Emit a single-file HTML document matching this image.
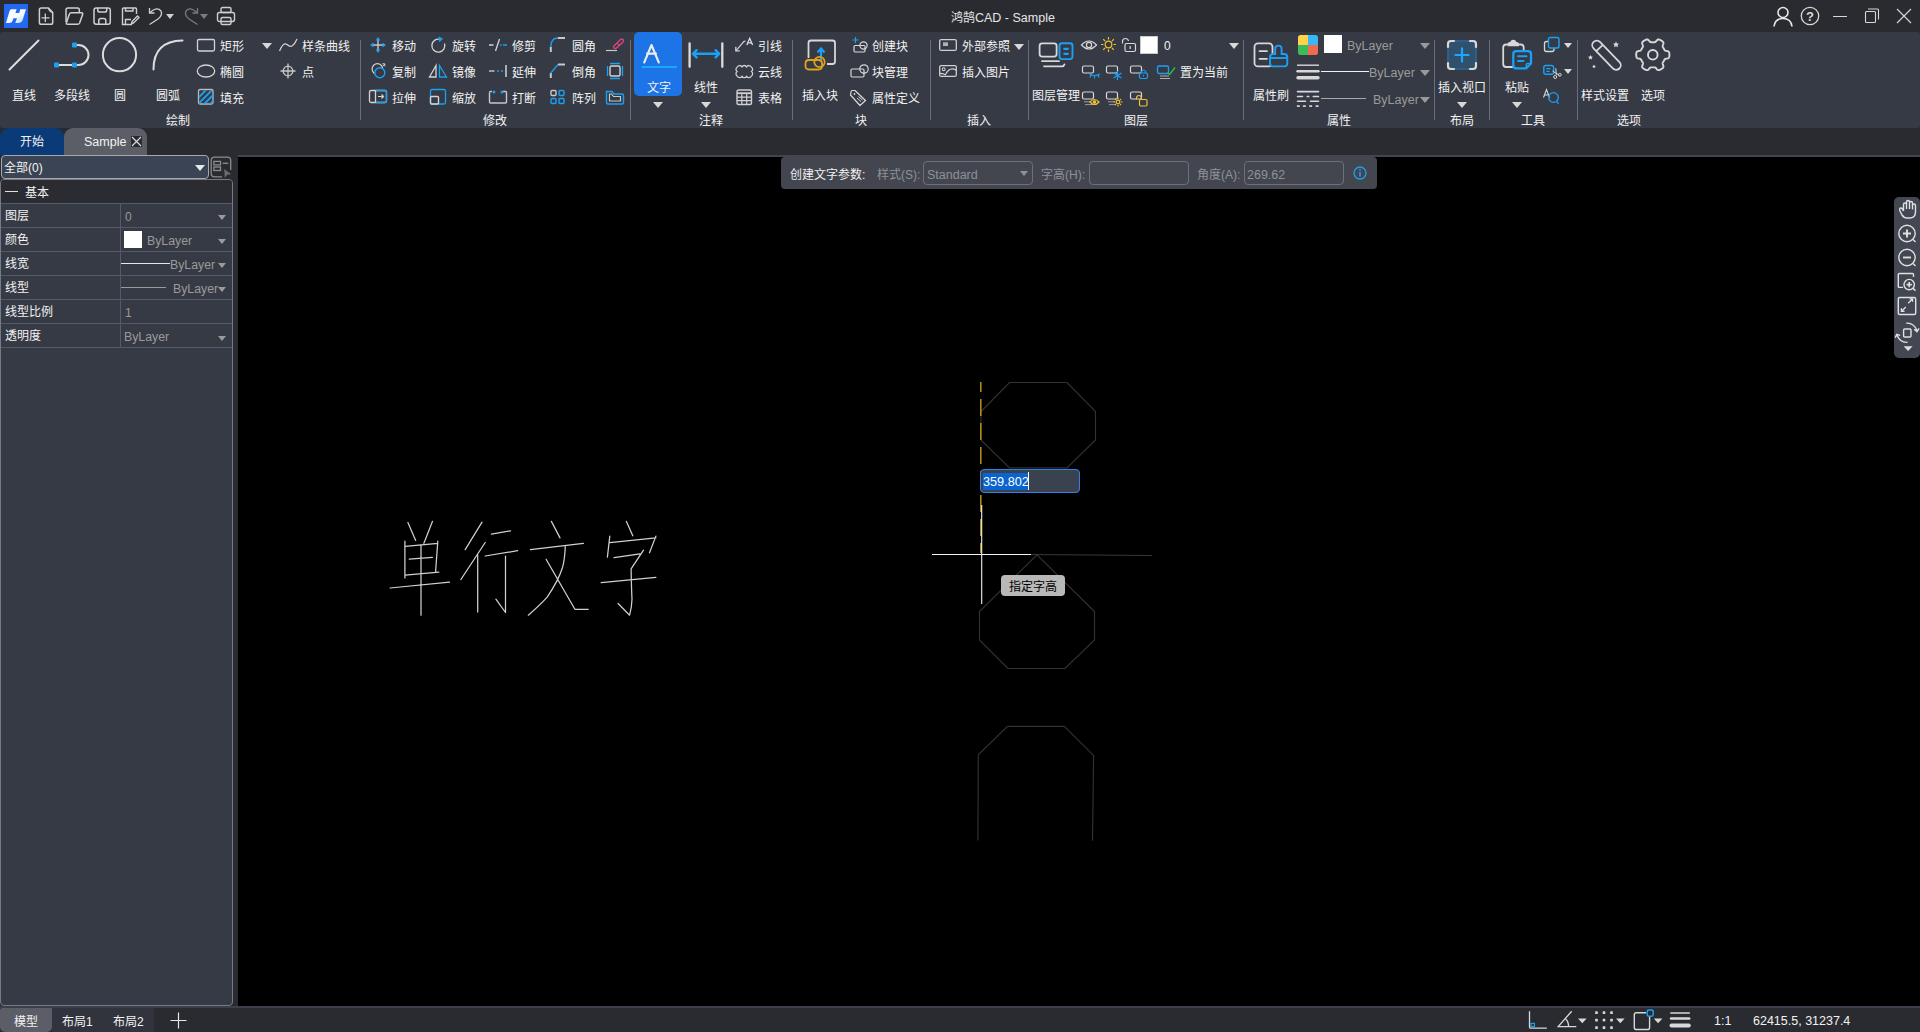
<!DOCTYPE html>
<html lang="zh-CN"><head><meta charset="utf-8">
<style>
*{margin:0;padding:0;box-sizing:border-box}
html,body{width:1920px;height:1032px;overflow:hidden;background:#2a2b30;font-family:"Liberation Sans",sans-serif;font-size:12px;color:#f2f2f2}
.a{position:absolute}
.t{position:absolute;white-space:nowrap;line-height:16px;font-size:12px}
.L{margin-top:-1px}
svg{position:absolute;overflow:visible}
#title{left:0;top:0;width:1920px;height:32px;background:#2a2b30}
#ribbon{left:0;top:32px;width:1920px;height:96px;background:#363a44;border-radius:3px}
#tabs{left:0;top:128px;width:1920px;height:27px;background:#2a2b30}
#left{left:0;top:155px;width:238px;height:851px;background:#2a2b30}
#canvas{left:238px;top:155px;width:1682px;height:851px;background:#000}
#status{left:0;top:1006px;width:1920px;height:26px;background:#2a2b30}
.sep{position:absolute;top:40px;width:1px;height:80px;background:#6a6e78}
.grp{position:absolute;top:113px;line-height:13px}
.tri{position:absolute;width:0;height:0;border-left:5px solid transparent;border-right:5px solid transparent;border-top:6px solid #d8d8d8}
</style></head><body>
<div id="title" class="a"></div>
<!-- TITLE BAR -->
<div class="a" style="left:4px;top:4px;width:24px;height:24px;background:#2468f2"></div>
<svg style="left:0;top:0" width="32" height="32" viewBox="0 0 32 32"><defs><linearGradient id="lg" x1="0" y1="0" x2="1" y2="1"><stop offset="0" stop-color="#ffffff"/><stop offset="0.55" stop-color="#f4fbff"/><stop offset="1" stop-color="#9fd8f5"/></linearGradient></defs><path d="M11.3 9.3 H16.6 L15.4 12.9 H19.2 L20.3 9.3 H26 L22.6 20.3 Q21.8 23 19 23 H15.3 L17 18.3 H13.4 L12.6 20.8 Q11.9 23 9.3 23 H6 L9.4 11.6 Q10 9.3 11.3 9.3 Z" fill="url(#lg)"/></svg>
<svg style="left:0;top:0" width="120" height="32" viewBox="0 0 120 32" fill="none" stroke="#cfcfcf" stroke-width="1.5" stroke-linejoin="round">
<path d="M41.2 7.9 H48.5 L52.7 12.6 V22.4 Q52.7 24.2 50.9 24.2 H41.2 Q39.4 24.2 39.4 22.4 V9.7 Q39.4 7.9 41.2 7.9 Z"/>
<path d="M48.6 8.5 Q49 11.5 52.2 12.4" stroke-width="1.2"/>
<path d="M41.5 17.9 H49.6 M45.3 13.6 V21.9" stroke-width="1.3"/>
<path d="M66 22 V9.7 Q66 7.9 67.8 7.9 H77.5 Q79.3 7.9 79.3 9.7 V12.6"/>
<path d="M66.3 23.2 L69.2 14.6 Q69.7 12.8 71.5 12.8 H81.5 Q83.2 12.8 82.6 14.6 L79.6 23 Q79 24.3 77.5 24.3 H67.7 Q65.9 24.3 66.3 23.2 Z"/>
<rect x="94" y="7.9" width="16.3" height="16.3" rx="2.2"/>
<path d="M97.8 8 V10.3 Q97.8 12.1 99.6 12.1 H104.9 Q106.7 12.1 106.7 10.3 V8"/>
<path d="M98.8 24 V20.6 Q98.8 18.6 100.8 18.6 H103.8 Q105.8 18.6 105.8 20.6 V24"/>
</svg>
<svg style="left:120px;top:6px" width="20" height="20" viewBox="0 0 20 20" fill="none" stroke="#cfcfcf" stroke-width="1.4"><path d="M12 18.5 H2.5 V3 Q2.5 2 3.5 2 H15.5 Q16.5 2 16.5 3 V8"/><path d="M5.5 2 V5 H13 V2 M5.5 18 V13.5 H11"/><path d="M11.5 18 L12 15.5 L17.5 10 L19 11.5 L13.5 17 Z"/></svg>
<svg style="left:148px;top:6px" width="18" height="20" viewBox="0 0 18 20" fill="none" stroke="#cfcfcf" stroke-width="1.3"><path d="M2 6.5 Q9 0 13 5 Q15 9 10 13 L1.5 18.5"/><path d="M1.5 2 L1.5 7 L6.5 7"/></svg>
<div class="tri" style="left:166px;top:14px;border-left-width:4.5px;border-right-width:4.5px;border-top-width:5px;border-top-color:#d0d0d0"></div>
<svg style="left:181px;top:6px" width="18" height="20" viewBox="0 0 18 20" fill="none" stroke="#7a7a7e" stroke-width="1.3"><path d="M16 6.5 Q9 0 5 5 Q3 9 8 13 L16.5 18.5"/><path d="M16.5 2 L16.5 7 L11.5 7"/></svg>
<div class="tri" style="left:200px;top:14px;border-left-width:4.5px;border-right-width:4.5px;border-top-width:5px;border-top-color:#7a7a7e"></div>
<svg style="left:216px;top:6px" width="20" height="20" viewBox="0 0 20 20" fill="none" stroke="#cfcfcf" stroke-width="1.4"><rect x="1.5" y="6.5" width="17" height="9" rx="2"/><rect x="5" y="1.5" width="10" height="5" rx="1.5"/><rect x="5" y="11.5" width="10" height="7" rx="1.5"/></svg>
<div class="t" style="left:951px;top:10px;color:#e6e6e6">鸿鹄<span style="font-size:12.5px">CAD - Sample</span></div>
<svg style="left:1772px;top:5px" width="22" height="22" viewBox="0 0 22 22" fill="none" stroke="#e8e8e8" stroke-width="1.6"><circle cx="11" cy="7.5" r="5"/><path d="M2 21.5 Q3 13.5 11 13.5 Q19 13.5 20 21.5"/></svg>
<svg style="left:1800px;top:6px" width="20" height="20" viewBox="0 0 20 20" fill="none" stroke="#d8d8d8" stroke-width="1.3"><circle cx="10" cy="10" r="8.7"/><text x="10" y="14.5" font-size="13" font-weight="bold" fill="#d8d8d8" stroke="none" text-anchor="middle" font-family="Liberation Sans">?</text></svg>
<div class="a" style="left:1833px;top:16px;width:14px;height:1px;background:#d8d8d8"></div>
<svg style="left:1864px;top:7px" width="17" height="17" viewBox="0 0 17 17" fill="none" stroke="#d8d8d8" stroke-width="1.1"><rect x="1.5" y="4.5" width="10" height="11" rx="1"/><path d="M4 2 H13.5 Q14.5 2 14.5 3 V12.5"/></svg>
<svg style="left:1896px;top:8px" width="16" height="16" viewBox="0 0 16 16" fill="none" stroke="#d8d8d8" stroke-width="1.1"><path d="M1 1 L15 15 M15 1 L1 15"/></svg>

<div id="ribbon" class="a"></div>
<div id="tabs" class="a"></div>
<!-- RIBBON: draw group -->
<svg style="left:0;top:32px" width="200" height="50" viewBox="0 32 200 50" fill="none" stroke="#dcdcdc" stroke-width="2" stroke-linecap="round">
<path d="M9.5 69.5 L38.5 40.5"/>
<path d="M74.5 45 H78.5 A10 10 0 0 1 78.5 65 H56.5"/>
<circle cx="119.5" cy="54.7" r="16.6"/>
<path d="M153.5 69.5 Q153.5 41 182.5 40.5"/>
<g fill="#1aa0f5" stroke="none"><rect x="72" y="42.5" width="5" height="5" rx="1.2"/><rect x="72" y="62.5" width="5" height="5" rx="1.2"/><rect x="54" y="62.5" width="5" height="5" rx="1.2"/></g>
</svg>
<div class="t" style="left:12px;top:88px">直线</div>
<div class="t" style="left:54px;top:88px">多段线</div>
<div class="t" style="left:114px;top:88px">圆</div>
<div class="t" style="left:156px;top:88px">圆弧</div>
<svg style="left:190px;top:32px" width="170" height="80" viewBox="190 32 170 80" fill="none" stroke="#d4d4d4" stroke-width="1.3">
<rect x="197.5" y="39.5" width="17" height="11.5" rx="1.5"/>
<ellipse cx="206" cy="71" rx="8.7" ry="6"/>
<rect x="198.5" y="89.5" width="14.5" height="14.5" rx="1.5" stroke="#b8b8b8"/>
<clipPath id="fc"><rect x="199.2" y="90.2" width="13.6" height="13.6"/></clipPath><g stroke="#1aa0f5" stroke-width="1.9" clip-path="url(#fc)"><path d="M196 100.2 L206 90.2 M196 106.2 L212 90.2 M202 106.2 L214 94.2 M208 106.2 L214 100.2"/></g>
<path d="M279.5 51 Q283 42 287 44.5 Q290 47 292 46 Q295 44 297 39" stroke-width="1.2"/>
<circle cx="288" cy="71" r="4.8" stroke="#c8c8c8"/>
<path d="M288 63.5 V78.5 M280.5 71 H295.5" stroke="#c8c8c8"/>
</svg>
<div class="tri" style="left:262px;top:43px;border-top-color:#d8d8d8"></div>
<div class="t" style="left:220px;top:39px">矩形</div>
<div class="t" style="left:302px;top:39px">样条曲线</div>
<div class="t" style="left:220px;top:65px">椭圆</div>
<div class="t" style="left:302px;top:65px">点</div>
<div class="t" style="left:220px;top:91px">填充</div>
<div class="t" style="left:166px;top:113px">绘制</div>
<div class="sep" style="left:360px"></div>
<!-- RIBBON: modify group -->
<svg style="left:360px;top:32px" width="272" height="80" viewBox="360 32 272 80" fill="none" stroke="#d4d4d4" stroke-width="1.3">
<!-- move -->
<path d="M378 38 V52 M371 45 H385" stroke="#c8c8c8" stroke-width="1.4"/>
<g fill="#1aa0f5" stroke="none"><path d="M378 37 L375.5 40.5 H380.5Z M378 53 L375.5 49.5 H380.5Z M370 45 L373.5 42.5 V47.5Z M386 45 L382.5 42.5 V47.5Z"/></g>
<!-- rotate -->
<path d="M440.5 39.5 A6.5 6.5 0 1 0 444.5 43.5"/>
<path d="M439 37 L442.5 39 L439.5 41.5 Z" fill="#1aa0f5" stroke="#1aa0f5" stroke-width="1"/>
<!-- copy -->
<circle cx="377.4" cy="69" r="5.3" stroke-width="1.2"/>
<circle cx="379.8" cy="72.8" r="5" stroke="#1aa0f5" stroke-width="1.4" fill="#363a44"/>
<path d="M382.3 63.8 H384.8 V66.3 M383 66 L384.8 64" stroke-width="1"/>
<!-- mirror -->
<path d="M436 65.5 L429.5 77 H436 Z"/>
<path d="M439.5 65.5 L446.5 77 H439.5 Z" stroke="#1aa0f5"/>
<!-- stretch -->
<rect x="369.5" y="90.5" width="17" height="12" rx="1.5"/>
<path d="M375.5 90.5 H385 Q386.5 90.5 386.5 92 V101 Q386.5 102.5 385 102.5 H375.5" stroke="#1aa0f5"/>
<path d="M375.5 90.5 V102.5" />
<path d="M378 96.5 H383 M381.5 94.5 L383.5 96.5 L381.5 98.5" stroke-width="1.2"/>
<!-- scale -->
<rect x="430.5" y="89.5" width="15" height="14.5" rx="1.5" stroke="#1aa0f5"/>
<rect x="430.5" y="96.5" width="8" height="7.5" rx="1" stroke="#d4d4d4" stroke-width="1.4"/>
<!-- trim -->
<path d="M489 45 H493.5 M495.5 51 L499.5 39" stroke-width="1.3"/>
<path d="M500 45 H501.5 M503 45 H507" stroke="#1aa0f5" stroke-width="1.3"/>
<!-- extend -->
<path d="M489 71 H494.5" stroke-width="1.3"/>
<path d="M497 71 H499 M501 71 H503" stroke="#1aa0f5" stroke-width="1.3"/>
<path d="M506 65 V77" stroke-width="1.5"/>
<!-- break -->
<path d="M489.5 92.5 V102 Q489.5 103 490.5 103 H505.5 Q506.5 103 506.5 102 V92.5 Q506.5 91.5 505.5 91.5 H503" stroke="#c8c8c8" stroke-width="1.4"/>
<path d="M492 91.5 H490.5 Q489.5 91.5 489.5 92.5" stroke="#c8c8c8" stroke-width="1.4"/>
<g fill="#1aa0f5" stroke="none"><circle cx="494" cy="92" r="1.5"/><circle cx="502" cy="92" r="1.5"/></g>
<!-- fillet -->
<path d="M550.8 52 V47" stroke="#c8c8c8" stroke-width="2"/>
<path d="M550.8 47 Q550.8 38 558 38" stroke="#1aa0f5" stroke-width="1.3"/>
<path d="M558 38 H565" stroke="#c8c8c8" stroke-width="2"/>
<!-- chamfer -->
<path d="M550.8 78 V73" stroke="#c8c8c8" stroke-width="2"/>
<path d="M550.8 73 L558 64.5" stroke="#1aa0f5" stroke-width="1.3"/>
<path d="M558 64.5 H565" stroke="#c8c8c8" stroke-width="2"/>
<!-- array -->
<g stroke-width="1.4"><rect x="551" y="90.5" width="5" height="5" rx="1" stroke="#c8c8c8"/><rect x="559" y="90.5" width="5" height="5" rx="1" stroke="#1aa0f5"/><rect x="551" y="98.5" width="5" height="5" rx="1" stroke="#1aa0f5"/><rect x="559" y="98.5" width="5" height="5" rx="1" stroke="#1aa0f5"/></g>
<!-- eraser -->
<path d="M606 50.5 H617" stroke="#c8c8c8" stroke-width="1.2"/>
<path d="M614 46 L620.5 39.5 Q622 38.5 623 39.5 Q624 40.5 623 42 L616.5 48 Q615 49 614 48 Q613 47 614 46 Z M617 43 L619.5 45.5" stroke="#e0457b" stroke-width="1.3"/>
<!-- offset -->
<rect x="610" y="66" width="10" height="10" rx="1.5" stroke="#d4d4d4" stroke-width="1.4"/>
<path d="M610 63.5 H620 M610 78.5 H620 M607.5 66 V76 M622.5 66 V76" stroke="#1aa0f5" stroke-width="1.3"/>
<!-- folder-like -->
<path d="M606.5 91.5 H612 L614 94 H622 Q623.5 94 623.5 95.5 V102.5 Q623.5 104 622 104 H608 Q606.5 104 606.5 102.5 Z" stroke="#1aa0f5" stroke-width="1.4"/>
<path d="M609.5 94 H611.5 L613.5 96.5 H620.5 V101 H609.5 Z" stroke="#c8c8c8" stroke-width="1.2"/>
</svg>
<div class="t" style="left:392px;top:39px">移动</div>
<div class="t" style="left:452px;top:39px">旋转</div>
<div class="t" style="left:512px;top:39px">修剪</div>
<div class="t" style="left:572px;top:39px">圆角</div>
<div class="t" style="left:392px;top:65px">复制</div>
<div class="t" style="left:452px;top:65px">镜像</div>
<div class="t" style="left:512px;top:65px">延伸</div>
<div class="t" style="left:572px;top:65px">倒角</div>
<div class="t" style="left:392px;top:91px">拉伸</div>
<div class="t" style="left:452px;top:91px">缩放</div>
<div class="t" style="left:512px;top:91px">打断</div>
<div class="t" style="left:572px;top:91px">阵列</div>
<div class="t" style="left:483px;top:113px">修改</div>
<div class="sep" style="left:630px"></div>
<!-- RIBBON: annotate -->
<div class="a" style="left:634px;top:32px;width:48px;height:64px;background:#1c74e6;border-radius:5px"></div>
<svg style="left:630px;top:32px" width="165" height="80" viewBox="630 32 165 80" fill="none" stroke="#e8e8e8" stroke-width="1.6">
<path d="M644.2 62.5 L651.5 45 L658.8 62.5 M647 53.6 H656" stroke="#ececec" stroke-width="2.1" stroke-linecap="round" stroke-linejoin="round"/>
<path d="M642.5 67 H676" stroke="#1aa8ff" stroke-width="2" stroke-linecap="round"/>
<path d="M689.6 43.3 V66.8 M722.3 43.3 V66.8" stroke="#dcdcdc" stroke-width="2.3" stroke-linecap="round"/>
<path d="M693.2 53.8 H719 M696.6 50.2 L693 53.8 L696.6 57.4 M715.6 50.2 L719.2 53.8 L715.6 57.4" stroke="#1aa0f5" stroke-width="2.4" stroke-linecap="round" stroke-linejoin="round"/>
<!-- leader -->
<path d="M735.8 50.8 L742.5 43.2 Q743.3 41.2 745.5 41.2" stroke="#d0d0d0" stroke-width="1.2"/>
<path d="M735.8 46.8 V50.8 H739.8" stroke="#d0d0d0" stroke-width="1.3"/>
<path d="M746.8 45 L749.7 38.3 L752.6 45 M747.8 42.8 H751.6" stroke="#e0e0e0" stroke-width="1.3"/>
<!-- cloud -->
<path d="M737.3 67 a2.7 2.7 0 0 1 4.7 -0.2 a2.7 2.7 0 0 1 4.6 0 a2.7 2.7 0 0 1 4.7 0.2 a2.8 2.8 0 0 1 0.2 4.6 a2.8 2.8 0 0 1 -0.2 4.6 a2.7 2.7 0 0 1 -4.7 0.2 a2.7 2.7 0 0 1 -4.6 0 a2.7 2.7 0 0 1 -4.7 -0.2 a2.8 2.8 0 0 1 -0.2 -4.6 a2.8 2.8 0 0 1 0.2 -4.6 Z" stroke="#d0d0d0" stroke-width="1.3"/>
<!-- table -->
<rect x="737" y="90" width="14.5" height="14.5" rx="1.8" stroke="#d0d0d0" stroke-width="1.4"/>
<path d="M737 93.2 H751.5" stroke="#d0d0d0" stroke-width="1.8"/>
<path d="M737 97.2 H751.5 M737 100.6 H751.5 M741.8 93.2 V104.5 M746.7 93.2 V104.5" stroke="#d0d0d0" stroke-width="1.2"/>
</svg>
<div class="t" style="left:647px;top:80px">文字</div>
<div class="tri" style="left:653px;top:102px"></div>
<div class="t" style="left:694px;top:80px">线性</div>
<div class="tri" style="left:701px;top:102px"></div>
<div class="t" style="left:758px;top:39px">引线</div>
<div class="t" style="left:758px;top:65px">云线</div>
<div class="t" style="left:758px;top:91px">表格</div>
<div class="t" style="left:699px;top:113px">注释</div>
<div class="sep" style="left:792px"></div>
<!-- RIBBON: block -->
<svg style="left:792px;top:32px" width="140" height="80" viewBox="792 32 140 80" fill="none" stroke="#d8d8d8" stroke-width="1.8">
<path d="M808.5 58 V43 Q808.5 40.5 811 40.5 H832.5 Q835 40.5 835 43 V61.5 Q835 64 832.5 64 H827"/>
<path d="M821 60 V49.5 M817.5 52.5 L821 48.5 L824.5 52.5" stroke="#1aa0f5" stroke-width="2.2"/>
<path d="M807.5 60 H818.5 Q822 60 822 63.5 V66 Q822 69.5 818.5 69.5 H809 Q805.5 69.5 805.5 66 V63.5 Q805.5 60 809 60" stroke="#e0a21a" stroke-width="1.8"/>
<circle cx="819.5" cy="62" r="5.2" stroke="#e0a21a" stroke-width="1.8"/>
<!-- create block -->
<path d="M855.5 37 V43 M852.5 40 H858.5" stroke="#1aa0f5" stroke-width="1.2"/>
<rect x="854" y="45.5" width="11" height="6.5" rx="1.2" stroke-width="1.2"/>
<circle cx="863.5" cy="45.5" r="3.6" stroke-width="1.2"/>
<!-- block manage -->
<rect x="851" y="69" width="13" height="8" rx="1.2" stroke-width="1.2"/>
<circle cx="864" cy="69" r="4.2" stroke-width="1.2"/>
<!-- attdef -->
<path d="M851 92 Q851 90.5 852.5 90.5 H855 L865.5 100.5 L860 105.5 L850.5 95 Z" stroke-width="1.2" stroke-linejoin="round"/>
<circle cx="854.5" cy="94" r="0.9" fill="#d8d8d8" stroke="none"/>
<path d="M857 98 L861 101.5 M858.5 96.5 L862.5 100" stroke-width="1"/>
</svg>
<div class="t" style="left:802px;top:88px">插入块</div>
<div class="t" style="left:872px;top:39px">创建块</div>
<div class="t" style="left:872px;top:65px">块管理</div>
<div class="t" style="left:872px;top:91px">属性定义</div>
<div class="t" style="left:855px;top:113px">块</div>
<div class="sep" style="left:930px"></div>
<!-- RIBBON: insert -->
<svg style="left:930px;top:32px" width="100" height="60" viewBox="930 32 100 60" fill="none" stroke="#d0d0d0" stroke-width="1.3">
<rect x="939.7" y="39.6" width="16.6" height="10.8" rx="1.5"/>
<rect x="943" y="42.3" width="5" height="3.7" fill="#b0b0b0" stroke="none"/>
<rect x="939.7" y="65.6" width="16.6" height="10.8" rx="1.5"/>
<circle cx="943.7" cy="69.2" r="1.4" stroke-width="1.1"/>
<path d="M940 73.4 Q942.5 73.4 945.3 74.8 Q948.5 68.5 952.5 68.8 Q955 69 956.3 70.3" stroke-width="1.2"/>
</svg>
<div class="t" style="left:962px;top:39px">外部参照</div>
<div class="tri" style="left:1014px;top:44px"></div>
<div class="t" style="left:962px;top:65px">插入图片</div>
<div class="t" style="left:967px;top:113px">插入</div>
<div class="sep" style="left:1028px"></div>
<!-- RIBBON: layer -->
<svg style="left:1028px;top:32px" width="215" height="80" viewBox="1028 32 215 80" fill="none" stroke="#d8d8d8" stroke-width="1.8">
<rect x="1039.6" y="43.3" width="17" height="13.3" rx="2.5"/>
<path d="M1042 61.2 H1059 M1044 66.3 H1062 Q1064 66.3 1064.5 64.3" stroke-linecap="round"/>
<rect x="1059.5" y="43.3" width="13" height="15.8" rx="2.5" stroke="#1aa0f5" stroke-width="1.9"/>
<path d="M1064.3 48.8 H1067.8 M1064.3 53.8 H1067.8" stroke="#1aa0f5" stroke-width="2.2" stroke-linecap="round"/>
<!-- eye -->
<path d="M1081.5 45 Q1089 37 1096.5 45 Q1089 53 1081.5 45 Z" stroke-width="1.2"/>
<circle cx="1089" cy="45" r="2.6" stroke-width="1.2"/>
<!-- sun -->
<g stroke="#f0c030" stroke-width="1.2"><circle cx="1108.5" cy="44.5" r="3.3"/><path d="M1108.5 37 V39.5 M1108.5 49.5 V52 M1101 44.5 H1103.5 M1113.5 44.5 H1116 M1103.2 39.2 L1105 41 M1112 48 L1113.8 49.8 M1103.2 49.8 L1105 48 M1112 41 L1113.8 39.2"/></g>
<!-- lock open -->
<rect x="1125" y="43.5" width="10.5" height="8" rx="1.5" stroke-width="1.2"/>
<path d="M1122.5 43.5 V41.5 Q1122.5 38.5 1125.5 38.5 Q1128 38.5 1128.5 41" stroke-width="1.2"/>
<path d="M1130.2 46 V49" stroke-width="1.2"/>
<!-- row2/3 small layer icons -->
<g stroke-width="1.2">
<rect x="1082.5" y="66" width="11" height="7" rx="1.5"/>
<rect x="1106.5" y="66" width="11" height="7" rx="1.5"/>
<rect x="1130.5" y="66" width="11" height="7" rx="1.5"/>
<rect x="1082.5" y="92" width="11" height="7" rx="1.5"/>
<rect x="1106.5" y="92" width="11" height="7" rx="1.5"/>
<rect x="1130.5" y="92" width="11" height="7" rx="1.5"/>
<path d="M1084 101.8 H1091 M1085 104.6 H1092 M1108 101.8 H1115 M1109 104.6 H1116" stroke="#a8a8a8" stroke-width="0.9"/>
</g>
<g stroke="#1aa0f5" stroke-width="1.2">
<path d="M1089.5 74 Q1094 77 1100 74 M1091 75 L1090 77.5 M1094.5 76 V78.5 M1098 75 L1099 77.5"/>
<path d="M1117.5 71 V80 M1113.5 73 L1121.5 78 M1113.5 78 L1121.5 73"/>
<rect x="1139.5" y="73" width="8" height="5.5" rx="1.5"/><path d="M1141.3 73 V71.5 Q1143.5 68.5 1145.7 71.5 V73"/><path d="M1143.5 75 V76.5" stroke-width="1"/>
</g>
<g stroke="#f0c030" stroke-width="1.2">
<path d="M1090 102 Q1094.5 97 1099 102 Q1094.5 107 1090 102 Z"/><circle cx="1094.5" cy="102" r="1.2" fill="#f0c030"/>
<circle cx="1118" cy="102" r="1.8"/><path d="M1118 97.5 V99 M1118 105 V106.5 M1113.5 102 H1115 M1121 102 H1122.5 M1115 99 L1116 100 M1120 104 L1121 105 M1115 105 L1116 104 M1120 100 L1121 99"/>
<rect x="1139.5" y="99.5" width="7.5" height="6.5" rx="1.2"/><path d="M1136.5 99.5 V98 Q1136.5 95.5 1139 95.5 Q1141 95.5 1141.5 97.5"/>
</g>
<!-- set current -->
<rect x="1157.5" y="66" width="11" height="7.5" rx="1.5" stroke="#1aa0f5" stroke-width="1.3"/>
<path d="M1160 76 H1169 M1160 78.5 H1170" stroke="#b0b0b0" stroke-width="1.1"/>
<path d="M1167.5 72.5 L1169.5 74.5 L1175 67.5" stroke="#2cc04a" stroke-width="1.3"/>
</svg>
<div class="a" style="left:1140px;top:36px;width:18px;height:18px;background:#fff;border:1px solid #c8c8c8"></div>
<div class="t L" style="left:1164px;top:39px">0</div>
<div class="tri" style="left:1229px;top:43px"></div>
<div class="t" style="left:1032px;top:88px">图层管理</div>
<div class="t" style="left:1180px;top:65px">置为当前</div>
<div class="t" style="left:1124px;top:113px">图层</div>
<div class="sep" style="left:1243px"></div>
<!-- RIBBON: properties -->
<svg style="left:1243px;top:32px" width="192" height="80" viewBox="1243 32 192 80" fill="none" stroke="#d8d8d8" stroke-width="1.8">
<rect x="1254.5" y="43.4" width="18" height="23" rx="3.5"/>
<path d="M1259.5 51.2 H1267 M1259.5 58.8 H1267" stroke-width="1.7" stroke-linecap="round"/>
<path d="M1275.2 54 V48.8 Q1275.2 45.6 1278.4 45.6 Q1281.6 45.6 1281.6 48.8 V54 H1284 Q1287.3 54 1287.3 57.3 V63.2 Q1287.3 66.4 1284 66.4 H1273.3 Q1270 66.4 1270 63.2 V57.3 Q1270 54 1273.3 54 Z" stroke="#1aa0f5" stroke-width="1.9" fill="#363a44"/>
<path d="M1270 58 H1287.3" stroke="#1aa0f5" stroke-width="1.9"/>
<g stroke="none"><path d="M1298 37.5 Q1298 35 1300.5 35 H1308 V45 H1298Z" fill="#ffd24a"/><path d="M1308 35 H1315.5 Q1318 35 1318 37.5 V45 H1308Z" fill="#35b8f5"/><path d="M1298 45 H1308 V55 H1300.5 Q1298 55 1298 52.5Z" fill="#3cbb5a"/><path d="M1308 45 H1318 V52.5 Q1318 55 1315.5 55 H1308Z" fill="#ee6a50"/></g>
<path d="M1297 65.2 H1319" stroke-width="1.4"/>
<path d="M1297.5 71.2 H1318.5" stroke-width="2.4" stroke-linecap="round"/>
<path d="M1298 77.8 H1318" stroke-width="3.4" stroke-linecap="round"/>
<g stroke-width="1.6" stroke-linecap="round"><path d="M1297.5 91.6 H1318.5"/>
<path d="M1297.5 96.5 H1302.5 M1307.3 96.5 H1308.8 M1313.3 96.5 H1318.5"/>
<path d="M1297.5 101.3 H1305.5 M1310.5 101.3 H1318.5"/>
<path d="M1297.5 106.1 H1299.2 M1303.5 106.1 H1305.2 M1309.8 106.1 H1311.5 M1316.2 106.1 H1318"/></g>
<path d="M1321 71.5 H1369" stroke="#f0f0f0" stroke-width="1.2"/>
<path d="M1321 98.5 H1366" stroke="#a8a8a8" stroke-width="1"/>
</svg>
<div class="a" style="left:1324px;top:35px;width:18px;height:18px;background:#fff"></div>
<div class="t L" style="left:1347px;top:38.5px;font-size:12.5px;color:#9a9a9a">ByLayer</div>
<div class="t L" style="left:1369px;top:66px;font-size:12.5px;color:#9a9a9a">ByLayer</div>
<div class="t L" style="left:1373px;top:93px;font-size:12.5px;color:#9a9a9a">ByLayer</div>
<div class="tri" style="left:1420px;top:43px;border-top-color:#9a9a9a"></div>
<div class="tri" style="left:1420px;top:70px;border-top-color:#9a9a9a"></div>
<div class="tri" style="left:1420px;top:97px;border-top-color:#9a9a9a"></div>
<div class="t" style="left:1253px;top:88px">属性刷</div>
<div class="t" style="left:1327px;top:113px">属性</div>
<div class="sep" style="left:1434px"></div>
<!-- RIBBON: layout -->
<svg style="left:1434px;top:32px" width="245" height="80" viewBox="1434 32 245 80" fill="none" stroke="#d8d8d8" stroke-width="1.8">
<rect x="1448" y="41" width="28" height="28" rx="3" fill="#30506b" stroke="#2e5f8c" stroke-width="2"/>
<path d="M1448 47 V44 Q1448 41 1451 41 H1454 M1470 41 H1473 Q1476 41 1476 44 V47 M1476 63 V66 Q1476 69 1473 69 H1470 M1454 69 H1451 Q1448 69 1448 66 V63" stroke-width="2.2" stroke-linecap="round"/>
<path d="M1462 48.4 V61.6 M1455.4 55 H1468.6" stroke="#1aa8ff" stroke-width="2.2" stroke-linecap="round"/>
<!-- paste -->
<rect x="1503.2" y="44.5" width="20.5" height="22.5" rx="3" stroke-width="1.8"/>
<path d="M1508.5 45.5 V44 Q1508.5 42.8 1509.7 42.8 H1511 Q1511.2 40.6 1513.3 40.6 Q1515.4 40.6 1515.6 42.8 H1516.9 Q1518.1 42.8 1518.1 44 V45.5 Z" stroke-width="1.6" fill="#d8d8d8"/>
<path d="M1516.3 51.2 H1528 Q1531 51.2 1531 54.2 V63.5 L1526.3 68.3 H1516.3 Q1513.3 68.3 1513.3 65.3 V54.2 Q1513.3 51.2 1516.3 51.2 Z" stroke="#1aa0f5" stroke-width="2.3" fill="#363a44" stroke-linejoin="round"/>
<path d="M1518 56.3 H1526.5 M1518 61.1 H1523.5" stroke="#1aa0f5" stroke-width="2" stroke-linecap="round"/>
<path d="M1531 63.5 H1527.5 Q1526.3 63.5 1526.3 64.7 V68.3" stroke="#1aa0f5" stroke-width="1.5"/>
<!-- copy small -->
<rect x="1544.5" y="41.5" width="9.5" height="10" rx="2" stroke-width="1.3"/>
<rect x="1548.5" y="37.5" width="10.5" height="10.5" rx="2" stroke="#1aa0f5" stroke-width="1.4" fill="#363a44"/>
<!-- cut small -->
<rect x="1543.8" y="65.5" width="9.8" height="8.8" rx="2" stroke="#1aa0f5" stroke-width="1.4"/>
<path d="M1546.3 68.6 H1550.5 M1546.3 71.4 H1549.5" stroke="#1aa0f5" stroke-width="1.1"/>
<path d="M1552.5 71 L1559.5 75.5 M1555.8 68.2 L1556.3 75" stroke-width="1"/>
<circle cx="1555.2" cy="77" r="1.5" stroke-width="1"/><circle cx="1559.8" cy="74.8" r="1.4" stroke-width="1"/>
<!-- find -->
<path d="M1543.5 97.5 L1546.5 89.5 L1549.5 97.5 M1544.7 95 H1548.3" stroke-width="1.1"/>
<circle cx="1553.5" cy="97.5" r="4.8" stroke="#1aa0f5" stroke-width="1.3"/>
<path d="M1556.5 101 L1558.5 104" stroke="#1aa0f5" stroke-width="1.3"/>
<!-- wand -->
<g transform="translate(1606.5,55.2) rotate(46)"><rect x="-18.5" y="-4.6" width="37" height="9.2" rx="4.6" stroke-width="1.8"/><path d="M-10 -4.6 V4.6" stroke-width="1.8"/></g>
<g fill="#d8d8d8" stroke="none"><path d="M1616 41.5 l1 2 2 .3-1.5 1.5.4 2-1.9-1-1.9 1 .4-2-1.5-1.5 2-.3z"/><path d="M1590.5 55 l.8 1.6 1.6.2-1.2 1.2.3 1.6-1.5-.8-1.5.8.3-1.6-1.2-1.2 1.6-.2z"/><path d="M1594 64.5 l.6 1.2 1.3.2-.9.9.2 1.3-1.2-.6-1.2.6.2-1.3-.9-.9 1.3-.2z"/></g>
<!-- gear -->
<path d="M1669.40 54.80 L1669.40 55.09 L1669.39 55.38 L1669.37 55.67 L1669.35 55.96 L1669.31 56.24 L1669.27 56.53 L1669.22 56.82 L1669.14 57.10 L1669.04 57.37 L1668.89 57.64 L1668.69 57.89 L1668.40 58.12 L1668.00 58.31 L1667.49 58.46 L1666.90 58.58 L1666.32 58.68 L1665.81 58.78 L1665.40 58.90 L1665.10 59.04 L1664.88 59.20 L1664.71 59.37 L1664.57 59.56 L1664.45 59.75 L1664.34 59.94 L1664.24 60.13 L1664.14 60.33 L1664.03 60.52 L1663.93 60.72 L1663.82 60.91 L1663.71 61.10 L1663.60 61.29 L1663.49 61.48 L1663.37 61.67 L1663.26 61.85 L1663.14 62.04 L1663.02 62.23 L1662.91 62.42 L1662.81 62.62 L1662.72 62.83 L1662.65 63.06 L1662.62 63.34 L1662.65 63.67 L1662.75 64.08 L1662.92 64.57 L1663.12 65.12 L1663.31 65.69 L1663.44 66.21 L1663.47 66.65 L1663.42 67.02 L1663.30 67.32 L1663.15 67.58 L1662.96 67.80 L1662.75 68.01 L1662.54 68.20 L1662.31 68.38 L1662.08 68.55 L1661.84 68.72 L1661.60 68.88 L1661.35 69.03 L1661.10 69.18 L1660.85 69.32 L1660.59 69.45 L1660.33 69.59 L1660.07 69.71 L1659.81 69.82 L1659.54 69.93 L1659.26 70.02 L1658.98 70.10 L1658.69 70.15 L1658.39 70.16 L1658.07 70.10 L1657.73 69.97 L1657.36 69.72 L1656.97 69.35 L1656.58 68.90 L1656.20 68.45 L1655.86 68.05 L1655.56 67.76 L1655.28 67.57 L1655.03 67.46 L1654.80 67.40 L1654.57 67.38 L1654.34 67.37 L1654.12 67.37 L1653.90 67.37 L1653.68 67.38 L1653.46 67.39 L1653.24 67.39 L1653.02 67.40 L1652.80 67.40 L1652.58 67.40 L1652.36 67.39 L1652.14 67.39 L1651.92 67.38 L1651.70 67.37 L1651.48 67.37 L1651.26 67.37 L1651.03 67.38 L1650.80 67.40 L1650.57 67.46 L1650.32 67.57 L1650.04 67.76 L1649.74 68.05 L1649.40 68.45 L1649.02 68.90 L1648.63 69.35 L1648.24 69.72 L1647.87 69.97 L1647.53 70.10 L1647.21 70.16 L1646.91 70.15 L1646.62 70.10 L1646.34 70.02 L1646.06 69.93 L1645.79 69.82 L1645.53 69.71 L1645.27 69.59 L1645.01 69.45 L1644.75 69.32 L1644.50 69.18 L1644.25 69.03 L1644.00 68.88 L1643.76 68.72 L1643.52 68.55 L1643.29 68.38 L1643.06 68.20 L1642.85 68.01 L1642.64 67.80 L1642.45 67.58 L1642.30 67.32 L1642.18 67.02 L1642.13 66.65 L1642.16 66.21 L1642.29 65.69 L1642.48 65.12 L1642.68 64.57 L1642.85 64.08 L1642.95 63.67 L1642.98 63.34 L1642.95 63.06 L1642.88 62.83 L1642.79 62.62 L1642.69 62.42 L1642.58 62.23 L1642.46 62.04 L1642.34 61.85 L1642.23 61.67 L1642.11 61.48 L1642.00 61.29 L1641.89 61.10 L1641.78 60.91 L1641.67 60.72 L1641.57 60.52 L1641.46 60.33 L1641.36 60.13 L1641.26 59.94 L1641.15 59.75 L1641.03 59.56 L1640.89 59.37 L1640.72 59.20 L1640.50 59.04 L1640.20 58.90 L1639.79 58.78 L1639.28 58.68 L1638.70 58.58 L1638.11 58.46 L1637.60 58.31 L1637.20 58.12 L1636.91 57.89 L1636.71 57.64 L1636.56 57.37 L1636.46 57.10 L1636.38 56.82 L1636.33 56.53 L1636.29 56.24 L1636.25 55.96 L1636.23 55.67 L1636.21 55.38 L1636.20 55.09 L1636.20 54.80 L1636.20 54.51 L1636.21 54.22 L1636.23 53.93 L1636.25 53.64 L1636.29 53.36 L1636.33 53.07 L1636.38 52.78 L1636.46 52.50 L1636.56 52.23 L1636.71 51.96 L1636.91 51.71 L1637.20 51.48 L1637.60 51.29 L1638.11 51.14 L1638.70 51.02 L1639.28 50.92 L1639.79 50.82 L1640.20 50.70 L1640.50 50.56 L1640.72 50.40 L1640.89 50.23 L1641.03 50.04 L1641.15 49.85 L1641.26 49.66 L1641.36 49.47 L1641.46 49.27 L1641.57 49.08 L1641.67 48.88 L1641.78 48.69 L1641.89 48.50 L1642.00 48.31 L1642.11 48.12 L1642.23 47.93 L1642.34 47.75 L1642.46 47.56 L1642.58 47.37 L1642.69 47.18 L1642.79 46.98 L1642.88 46.77 L1642.95 46.54 L1642.98 46.26 L1642.95 45.93 L1642.85 45.52 L1642.68 45.03 L1642.48 44.48 L1642.29 43.91 L1642.16 43.39 L1642.13 42.95 L1642.18 42.58 L1642.30 42.28 L1642.45 42.02 L1642.64 41.80 L1642.85 41.59 L1643.06 41.40 L1643.29 41.22 L1643.52 41.05 L1643.76 40.88 L1644.00 40.72 L1644.25 40.57 L1644.50 40.42 L1644.75 40.28 L1645.01 40.15 L1645.27 40.01 L1645.53 39.89 L1645.79 39.78 L1646.06 39.67 L1646.34 39.58 L1646.62 39.50 L1646.91 39.45 L1647.21 39.44 L1647.53 39.50 L1647.87 39.63 L1648.24 39.88 L1648.63 40.25 L1649.02 40.70 L1649.40 41.15 L1649.74 41.55 L1650.04 41.84 L1650.32 42.03 L1650.57 42.14 L1650.80 42.20 L1651.03 42.22 L1651.26 42.23 L1651.48 42.23 L1651.70 42.23 L1651.92 42.22 L1652.14 42.21 L1652.36 42.21 L1652.58 42.20 L1652.80 42.20 L1653.02 42.20 L1653.24 42.21 L1653.46 42.21 L1653.68 42.22 L1653.90 42.23 L1654.12 42.23 L1654.34 42.23 L1654.57 42.22 L1654.80 42.20 L1655.03 42.14 L1655.28 42.03 L1655.56 41.84 L1655.86 41.55 L1656.20 41.15 L1656.58 40.70 L1656.97 40.25 L1657.36 39.88 L1657.73 39.63 L1658.07 39.50 L1658.39 39.44 L1658.69 39.45 L1658.98 39.50 L1659.26 39.58 L1659.54 39.67 L1659.81 39.78 L1660.07 39.89 L1660.33 40.01 L1660.59 40.15 L1660.85 40.28 L1661.10 40.42 L1661.35 40.57 L1661.60 40.72 L1661.84 40.88 L1662.08 41.05 L1662.31 41.22 L1662.54 41.40 L1662.75 41.59 L1662.96 41.80 L1663.15 42.02 L1663.30 42.28 L1663.42 42.58 L1663.47 42.95 L1663.44 43.39 L1663.31 43.91 L1663.12 44.48 L1662.92 45.03 L1662.75 45.52 L1662.65 45.93 L1662.62 46.26 L1662.65 46.54 L1662.72 46.77 L1662.81 46.98 L1662.91 47.18 L1663.02 47.37 L1663.14 47.56 L1663.26 47.75 L1663.37 47.93 L1663.49 48.12 L1663.60 48.31 L1663.71 48.50 L1663.82 48.69 L1663.93 48.88 L1664.03 49.08 L1664.14 49.27 L1664.24 49.47 L1664.34 49.66 L1664.45 49.85 L1664.57 50.04 L1664.71 50.23 L1664.88 50.40 L1665.10 50.56 L1665.40 50.70 L1665.81 50.82 L1666.32 50.92 L1666.90 51.02 L1667.49 51.14 L1668.00 51.29 L1668.40 51.48 L1668.69 51.71 L1668.89 51.96 L1669.04 52.23 L1669.14 52.50 L1669.22 52.78 L1669.27 53.07 L1669.31 53.36 L1669.35 53.64 L1669.37 53.93 L1669.39 54.22 L1669.40 54.51 Z" stroke-width="1.9" stroke-linejoin="round"/>
<circle cx="1652.8" cy="54.8" r="4.8" stroke-width="1.9"/>
</svg>
<div class="t" style="left:1438px;top:80px">插入视口</div>
<div class="tri" style="left:1457px;top:102px"></div>
<div class="t" style="left:1450px;top:113px">布局</div>
<div class="sep" style="left:1489px"></div>
<div class="t" style="left:1505px;top:80px">粘贴</div>
<div class="tri" style="left:1512px;top:102px"></div>
<div class="tri" style="left:1564px;top:43px;border-left-width:4.5px;border-right-width:4.5px;border-top-width:5px"></div>
<div class="tri" style="left:1564px;top:69px;border-left-width:4.5px;border-right-width:4.5px;border-top-width:5px"></div>
<div class="t" style="left:1521px;top:113px">工具</div>
<div class="sep" style="left:1577px"></div>
<div class="t" style="left:1581px;top:88px">样式设置</div>
<div class="t" style="left:1641px;top:88px">选项</div>
<div class="t" style="left:1617px;top:113px">选项</div>




<div id="left" class="a"></div>
<!-- TABS -->
<div class="a" style="left:0;top:128px;width:64px;height:27px;background:#0b3a78;border-radius:9px 9px 0 0"></div>
<div class="t" style="left:20px;top:134px">开始</div>
<div class="a" style="left:64px;top:128px;width:83px;height:27px;background:#5b5e67;border-radius:9px 9px 0 0"></div>
<div class="t L" style="left:84px;top:135px;font-size:12.5px">Sample</div>
<div class="a" style="left:131px;top:136px;width:11px;height:11px;background:#2a2b30"></div>
<svg style="left:131px;top:136px" width="11" height="11" viewBox="0 0 11 11" stroke="#e0e0e0" stroke-width="1.1"><path d="M1 1 L10 10 M10 1 L1 10"/></svg>
<!-- LEFT PANEL -->
<div class="a" style="left:1px;top:155px;width:208px;height:24px;background:#3a4454;border:1px solid #a8a8a8;border-radius:4px"></div>
<div class="t" style="left:4px;top:160px">全部(0)</div>
<div class="tri" style="left:195px;top:165px;border-top-color:#e8e8e8"></div>
<svg style="left:210px;top:156px" width="22" height="22" viewBox="0 0 22 22" fill="none" stroke="#8c8c8c" stroke-width="1.3"><path d="M20.7 14 V4.5 Q20.7 1.2 17.5 1.2 H4.5 Q1.2 1.2 1.2 4.5 V17.5 Q1.2 20.8 4.5 20.8 H12"/><rect x="3.9" y="5.4" width="6.6" height="3.5"/><rect x="3.9" y="11" width="6.6" height="3.5"/><path d="M12.7 7.3 H18.3"/><path d="M14.2 13 L21.2 18.2 L17.2 18.8 L14.8 22 Z" fill="#6c6c6c" stroke="none"/></svg>
<div class="a" style="left:0;top:179px;width:233px;height:827px;background:#363a44;border:1px solid #757a86;border-radius:4px"></div>
<div class="a" style="left:1px;top:180px;width:231px;height:23px;background:#2a2c32;border-radius:3px 3px 0 0"></div>
<div class="a" style="left:5px;top:191px;width:13px;height:1px;background:#e0e0e0"></div>
<div class="t" style="left:25px;top:185px">基本</div>
<div class="a" style="left:1px;top:203px;width:231px;height:1px;background:#545a68"></div>
<div class="a" style="left:1px;top:227px;width:231px;height:1px;background:#545a68"></div>
<div class="a" style="left:1px;top:251px;width:231px;height:1px;background:#545a68"></div>
<div class="a" style="left:1px;top:275px;width:231px;height:1px;background:#545a68"></div>
<div class="a" style="left:1px;top:299px;width:231px;height:1px;background:#545a68"></div>
<div class="a" style="left:1px;top:323px;width:231px;height:1px;background:#545a68"></div>
<div class="a" style="left:1px;top:347px;width:231px;height:1px;background:#545a68"></div>
<div class="a" style="left:120px;top:203px;width:1px;height:145px;background:#545a68"></div>
<div class="t" style="left:5px;top:208px">图层</div>
<div class="t" style="left:5px;top:232px">颜色</div>
<div class="t" style="left:5px;top:256px">线宽</div>
<div class="t" style="left:5px;top:280px">线型</div>
<div class="t" style="left:5px;top:304px">线型比例</div>
<div class="t" style="left:5px;top:328px">透明度</div>
<div class="t L" style="left:125px;top:209.5px;color:#9a9a9a">0</div>
<div class="a" style="left:124px;top:231px;width:18px;height:17px;background:#fff"></div>
<div class="t L" style="left:147px;top:233.5px;color:#9a9a9a;font-size:12.3px">ByLayer</div>
<div class="a" style="left:121px;top:263px;width:49px;height:1px;background:#e8e8e8"></div>
<div class="t L" style="left:170px;top:257.5px;color:#9a9a9a;font-size:12.3px">ByLayer</div>
<div class="a" style="left:121px;top:287px;width:45px;height:1px;background:#9a9a9a"></div>
<div class="t L" style="left:173px;top:281.5px;color:#9a9a9a;font-size:12.3px">ByLayer</div>
<div class="t L" style="left:125px;top:305.5px;color:#9a9a9a">1</div>
<div class="t L" style="left:124px;top:329.5px;color:#9a9a9a;font-size:12.3px">ByLayer</div>
<div class="tri" style="left:217.5px;top:214.5px;border-left-width:4.5px;border-right-width:4.5px;border-top-width:5px;border-top-color:#9a9a9a"></div>
<div class="tri" style="left:217.5px;top:238.5px;border-left-width:4.5px;border-right-width:4.5px;border-top-width:5px;border-top-color:#9a9a9a"></div>
<div class="tri" style="left:217.5px;top:262.5px;border-left-width:4.5px;border-right-width:4.5px;border-top-width:5px;border-top-color:#9a9a9a"></div>
<div class="tri" style="left:217.5px;top:286.5px;border-left-width:4.5px;border-right-width:4.5px;border-top-width:5px;border-top-color:#9a9a9a"></div>
<div class="tri" style="left:217.5px;top:335.5px;border-left-width:4.5px;border-right-width:4.5px;border-top-width:5px;border-top-color:#9a9a9a"></div>

<div id="canvas" class="a"></div>
<!-- CANVAS -->
<div class="a" style="left:238px;top:155px;width:1682px;height:2px;background:#404550"></div>
<svg style="left:0;top:0" width="1920" height="1032" viewBox="0 0 1920 1032" fill="none">
<g stroke="#323232" stroke-width="1.15">
<path d="M1009.5 382.5 H1067 L1095.5 411.5 V440 L1067 467.8 H1009.5 L981 440 V411.5 Z"/>
<path d="M1037 554.8 L1094.5 611.5 V640 L1065 668.5 H1008 L979.5 640 V611.5 Z"/>
<path d="M977.9 840.5 L978.3 754.8 L1007.5 726.3 H1064.4 L1093.6 755.4 L1092.5 840.8"/>
<path d="M1031 554.5 L1152 555.5" stroke="#383838"/>
</g>
<path d="M980.8 382 V554" stroke="#b08818" stroke-width="1.6" stroke-dasharray="10 7 17 7 17 7 17 7 17 7 17 7 17 7"/>
<path d="M932 554.5 H1031 M981.7 505 V604" stroke="#f4f4f4" stroke-width="1.1"/>
<g stroke="#d0d0d0" stroke-width="1.25" stroke-linecap="round" stroke-linejoin="round">
<path d="M407.9 522.5 L415.7 540.4 M432.4 521.4 L423.9 543.3 M404.9 541.1 V577.9 M405.3 546.4 L437.8 543.3 M437.8 541.1 L435.6 571.5 M409.3 559.2 L432.4 557.4 M405.3 575.2 L438.8 572.2 M421 544.9 V615.2 M390.1 588 L449.5 582.2"/>
<path d="M482 522.2 L465.2 549.6 M485.2 542.5 L460.9 579.5 M477.7 555 V612 M491.4 534.2 L510.6 530.8 M485.2 556 L517.7 550.7 M505.5 556 V612.5 L495.9 599.2"/>
<path d="M551.4 521.4 L560 537.9 M530.4 549.6 L583.4 543.3 M565.3 545.9 Q564.8 559 562.6 567.2 Q560 575 556.8 581.1 Q552 590 547.2 597.1 Q540 605 528.3 615.2 M546.1 559.2 L574.9 609.3 H588.2"/>
<path d="M626.4 521.4 L632.8 535.8 M609.8 536.1 L607.4 557.1 M609.8 542.7 L655.9 537.9 M655.9 536.1 L649.5 552.8 M614 557.6 L640 553.8 M643.5 550.2 L631.1 568.8 Q631.5 590 632 599.2 Q631.8 607 629.6 615.2 L618.1 603.5 M601.2 582.7 L655.9 577.4"/>
</g>
</svg>
<!-- dynamic input -->
<div class="a" style="left:980px;top:469px;width:100px;height:24px;background:#3a4250;border:1px solid #2f80e8;border-radius:4px"></div>
<div class="a" style="left:983px;top:473px;width:45px;height:17px;background:#0a64d0"></div>
<div class="t" style="left:983px;top:474.5px;font-size:12.7px;line-height:15px;color:#fff">359.802</div>
<div class="a" style="left:1028px;top:472px;width:1px;height:18px;background:#fff"></div>
<!-- tooltip -->
<div class="a" style="left:1001px;top:575px;width:64px;height:21px;background:#b8b8b8;border-radius:4px"></div>
<div class="t" style="left:1009px;top:579px;color:#000">指定字高</div>
<!-- command param bar -->
<div class="a" style="left:781px;top:157px;width:596px;height:32px;background:#43464f;border-radius:4px"></div>
<div class="t" style="left:790px;top:167px;color:#f0f0f0">创建文字参数:</div>
<div class="t" style="left:877px;top:167px;color:#8e9198">样式(S):</div>
<div class="a" style="left:923px;top:161px;width:110px;height:24px;border:1px solid #6c7078;border-radius:4px;background:#43464f"></div>
<div class="t L" style="left:927px;top:167.5px;color:#8e9198;font-size:12.5px">Standard</div>
<div class="tri" style="left:1020px;top:171px;border-left-width:4.5px;border-right-width:4.5px;border-top-width:5px;border-top-color:#8e9198"></div>
<div class="t" style="left:1041px;top:167px;color:#8e9198">字高(H):</div>
<div class="a" style="left:1089px;top:161px;width:100px;height:24px;border:1px solid #6c7078;border-radius:4px"></div>
<div class="t" style="left:1197px;top:167px;color:#8e9198">角度(A):</div>
<div class="a" style="left:1244px;top:161px;width:100px;height:24px;border:1px solid #6c7078;border-radius:4px"></div>
<div class="t L" style="left:1247px;top:167.5px;color:#8e9198;font-size:12.5px">269.62</div>
<svg style="left:1353px;top:166px" width="14" height="14" viewBox="0 0 14 14" fill="none" stroke="#1a9ef0" stroke-width="1.3"><circle cx="7" cy="7" r="6"/><path d="M7 6 V10.5" stroke-width="1.6"/><circle cx="7" cy="3.8" r="0.9" fill="#1a9ef0" stroke="none"/></svg>
<!-- nav bar -->
<div class="a" style="left:1894px;top:197px;width:25.5px;height:161px;background:#434752;border-radius:5px"></div>
<svg style="left:1894px;top:197px" width="26" height="161" viewBox="0 0 26 161" fill="none" stroke="#e0e0e0" stroke-width="1.4">
<path d="M6 14 Q5 11 7 11 Q8.5 11 9.5 14 V7.5 Q9.5 6 11 6 Q12.5 6 12.5 7.5 V12 V5 Q12.5 3.5 14 3.5 Q15.5 3.5 15.5 5 V12 V6 Q15.5 4.5 17 4.5 Q18.5 4.5 18.5 6 V12.5 V8.5 Q18.5 7 20 7 Q21.5 7 21.5 8.5 V15 Q21.5 21 15.5 21 H13 Q10 21 8 18 Z"/>
<circle cx="13" cy="36.5" r="8.2"/><path d="M13 32.5 V40.5 M9 36.5 H17" stroke-width="1.9"/><path d="M19 42.5 L21.5 45"/>
<circle cx="13" cy="60.5" r="8.2"/><path d="M9 60.5 H17" stroke-width="1.9"/><path d="M19 66.5 L21.5 69"/>
<path d="M9 90.4 H5.3 Q4.3 90.4 4.3 89.4 V77.5 Q4.3 76.5 5.3 76.5 H18.5 Q19.5 76.5 19.5 77.5 V80"/><circle cx="15.2" cy="87.6" r="5.2"/><path d="M15.2 85 V90.2 M12.6 87.6 H17.8" stroke-width="1.6"/><path d="M19 91.4 L21.5 93.6"/>
<rect x="4.3" y="100.5" width="17.4" height="17" rx="1.5"/><path d="M14.2 106.3 L18.4 102 M15.6 101.8 H18.6 V104.8 M7.6 114.2 L11.8 110 M7.4 111.2 V114.4 H10.6" stroke-width="1.3"/>
<rect x="9.6" y="132" width="7.4" height="8" rx="1"/>
<path d="M12.3 126.2 Q19.5 125.5 23 133.5 M20.2 132.2 L23 134.6 L25 131.4"/>
<path d="M13.5 145.3 Q6.5 146 3 138.2 M1.2 140.6 L2.8 137.4 L6.2 138.4"/>
<path d="M9.6 149.3 H18.6 L14.1 154 Z" fill="#e0e0e0" stroke="none"/>
</svg>

<div id="status" class="a"></div>
<!-- STATUS BAR -->
<div class="a" style="left:0;top:1006px;width:1920px;height:2px;background:#3a3f4b"></div>
<div class="a" style="left:52px;top:1008px;width:102px;height:24px;background:#31343c"></div>
<div class="a" style="left:0;top:1008px;width:52px;height:24px;background:#5b5e67;border-radius:2px 0 5px 5px"></div>
<div class="t" style="left:14px;top:1014px">模型</div>
<div class="t" style="left:62px;top:1014px">布局1</div>
<div class="t" style="left:113px;top:1014px">布局2</div>
<svg style="left:170px;top:1012px" width="17" height="17" viewBox="0 0 17 17" stroke="#e8e8e8" stroke-width="1.2"><path d="M8.5 0.5 V16.5 M0.5 8.5 H16.5"/></svg>
<svg style="left:1520px;top:1006px" width="180" height="26" viewBox="1520 1006 180 26" fill="none" stroke="#d8d8d8" stroke-width="1.3">
<path d="M1529.5 1011.3 V1027 Q1529.5 1028.2 1530.7 1028.2 H1546.8"/>
<rect x="1531" y="1023.4" width="3.4" height="3.2" stroke="#1aa0f5" stroke-width="1.2"/>
<path d="M1571.7 1011.2 L1558.2 1026.6 H1576.3 M1565.2 1018.6 Q1568.3 1021 1568.6 1026.4" stroke-width="1.3"/>
<path d="M1578 1018.5 H1586.6 L1582.3 1023.3 Z" fill="#d8d8d8" stroke="none"/>
<g fill="#d8d8d8" stroke="none"><rect x="1595.2" y="1011.3" width="2.6" height="2.6" rx="0.5"/><rect x="1602.7" y="1011.3" width="2.6" height="2.6" rx="0.5"/><rect x="1610.2" y="1011.3" width="2.6" height="2.6" rx="0.5"/><rect x="1595.2" y="1018.8" width="2.6" height="2.6" rx="0.5"/><circle cx="1604" cy="1020.1" r="1.5"/><rect x="1610.2" y="1018.8" width="2.6" height="2.6" rx="0.5"/><rect x="1595.2" y="1026.3" width="2.6" height="2.6" rx="0.5"/><rect x="1602.7" y="1026.3" width="2.6" height="2.6" rx="0.5"/><rect x="1610.2" y="1026.3" width="2.6" height="2.6" rx="0.5"/></g>
<path d="M1616 1018.5 H1624.6 L1620.3 1023.3 Z" fill="#d8d8d8" stroke="none"/>
<path d="M1646 1012.8 H1636.4 Q1634.3 1012.8 1634.3 1014.9 V1027.4 Q1634.3 1029.5 1636.4 1029.5 H1647.5 Q1649.6 1029.5 1649.6 1027.4 V1016.8" stroke-width="1.4"/>
<rect x="1647.2" y="1010" width="6" height="6.2" rx="1.6" stroke="#1aa0f5" stroke-width="1.5"/>
<path d="M1653.8 1018.5 H1662.4 L1658.1 1023.3 Z" fill="#d8d8d8" stroke="none"/>
<path d="M1670.8 1013.1 H1689.3" stroke-width="1.5" stroke-linecap="round"/>
<path d="M1671 1018.5 H1689.2" stroke-width="2.5" stroke-linecap="round"/>
<path d="M1671.5 1025.4 H1688.8" stroke-width="4" stroke-linecap="round"/>
</svg>
<div class="t L" style="left:1714px;top:1014px;font-size:12.5px">1:1</div>
<div class="t L" style="left:1753px;top:1014px;font-size:12.5px">62415.5, 31237.4</div>

</body></html>
